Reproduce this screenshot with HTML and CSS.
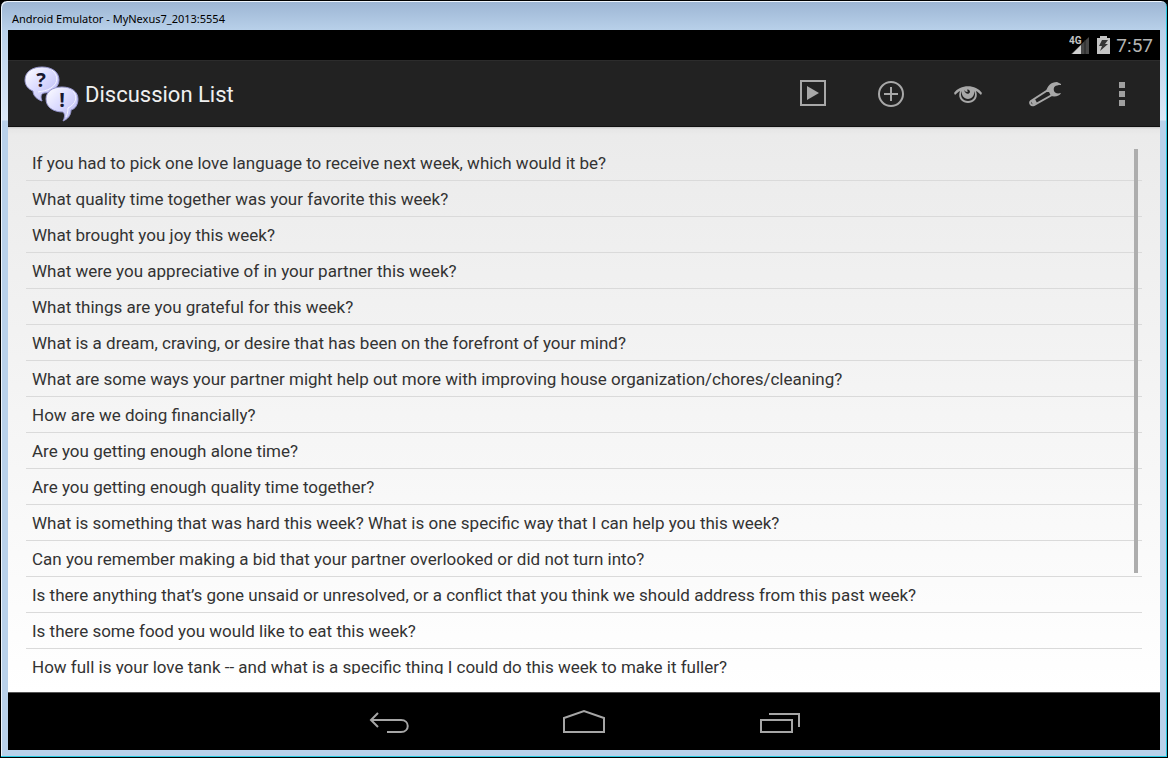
FILE: index.html
```html
<!DOCTYPE html>
<html lang="en">
<head>
    <meta charset="UTF-8">
    <meta name="viewport" content="width=device-width, initial-scale=1.0">
    <title>Discussion List</title>
    <link rel="stylesheet" href="styles.css">
</head>
<body>
    <div class="window">
        <div class="titleBar">Android Emulator - MyNexus7_2013:5554</div>
        <div class="screen">
            <div class="statusBar">
                <svg class="signal" width="22" height="20" viewBox="0 0 22 20">
                    <path d="M2 19L20 2V19Z" fill="#484848"/>
                    <path d="M3 19L12 10V19Z" fill="#d0d0d0"/>
                    <path d="M16 5V19" stroke="#222"/>
                    <text x="0" y="9" class="network">4G</text>
                </svg>
                <svg width="13" height="20" viewBox="0 0 13 20">
                    <path d="M0 3H3V1H10V3H13V19H0Z" fill="#c4c4c4"/>
                    <path d="M5 5H11L8 9H11L3 16L5 11H2Z" fill="#333"/>
                </svg>
                <span class="clock">7:57</span>
            </div>
            <header class="actionBar">
                <svg class="logo" width="56" height="56" viewBox="0 0 56 56">
                    <defs>
                        <linearGradient id="bubble" x1="0" y1="0" x2="1" y2="1">
                            <stop offset="0" stop-color="#ffffff"/>
                            <stop offset=".45" stop-color="#dcdcff"/>
                            <stop offset="1" stop-color="#b4b4f0"/>
                        </linearGradient>
                    </defs>
                    <path d="M18 1C28 1 35 6 35 14C35 21 28 27 20 27C16 28 17 32 18 35C12 33 9 29 9 25C4 23 1 19 1 14C1 6 8 1 18 1Z" fill="url(#bubble)" stroke="#9696cc"/>
                    <path d="M28 4C34 9 35 17 27 22C23 25 18 25 14 26" fill="none" stroke="#f4f4ff" stroke-width="1"/>
                    <path d="M38 21C48 21 54 26 54 33C54 39 51 43 47 44C47 49 44 53 39 55C41 51 41 48 39 46C29 46 22 41 22 33C22 26 28 21 38 21Z" fill="url(#bubble)" stroke="#9696cc"/>
                    <path d="M49 25C54 31 52 38 44 42C44 46 43 49 42 51" fill="none" stroke="#f4f4ff" stroke-width="1"/>
                    <text x="17" y="21" class="mark">?</text>
                    <text x="38" y="41" class="mark">!</text>
                </svg>
                <h1>Discussion List</h1>
                <div class="actions">
                    <button aria-label="Play">
                        <svg width="34" height="34" viewBox="0 0 34 34">
                            <path d="M4 4H28V28H4Z" fill="none" stroke="#a8a8a8" stroke-width="2"/>
                            <path d="M10 9L22 16L10 23Z" fill="#a8a8a8"/>
                        </svg>
                    </button>
                    <button aria-label="Add">
                        <svg width="34" height="34" viewBox="0 0 34 34" fill="none" stroke="#a8a8a8" stroke-width="2">
                            <circle cx="17" cy="17" r="12"/>
                            <path d="M17 10V24M10 17H24"/>
                        </svg>
                    </button>
                    <button aria-label="View">
                        <svg width="34" height="34" viewBox="0 0 34 34">
                            <path d="M3 16C9 7 25 7 31 16L30 18C28 16 27 15 25 14C28 22 22 26 17 26C12 26 6 22 9 14C7 15 6 16 4 18Z" fill="#a8a8a8"/>
                            <path d="M11 14C8 19 12 24 17 24C22 24 26 19 23 14C24 18 21 22 17 22C13 22 10 18 11 14Z" fill="#222"/>
                            <path d="M13 13C14 17 18 18 19 15C19 13 17 12 16 13C17 14 17 15 16 15C15 15 14 14 13 13Z" fill="#222"/>
                        </svg>
                    </button>
                    <button aria-label="Tools">
                        <svg width="34" height="34" viewBox="0 0 34 34">
                            <path d="M20 13L3 24C1 26 3 29 6 28L24 18" fill="none" stroke="#a8a8a8" stroke-width="2"/>
                            <path d="M3 24L7 22L9 26L5 28Z" fill="#a8a8a8"/>
                            <path d="M18 15C19 9 23 5 29 5L33 7V8C27 8 25 10 26 14C27 16 29 17 33 16C32 19 27 20 23 19L21 15Z" fill="#a8a8a8"/>
                        </svg>
                    </button>
                    <button aria-label="More options">
                        <svg width="34" height="34" viewBox="0 0 34 34" fill="#a0a0a0">
                            <path d="M14 5H20V11H14ZM14 14H20V20H14ZM14 23H20V29H14Z"/>
                        </svg>
                    </button>
                </div>
            </header>
            <main class="content">
                <ul class="questions">
                    <li>If you had to pick one love language to receive next week, which would it be?</li>
                    <li>What quality time together was your favorite this week?</li>
                    <li>What brought you joy this week?</li>
                    <li>What were you appreciative of in your partner this week?</li>
                    <li>What things are you grateful for this week?</li>
                    <li>What is a dream, craving, or desire that has been on the forefront of your mind?</li>
                    <li>What are some ways your partner might help out more with improving house organization/chores/cleaning?</li>
                    <li>How are we doing financially?</li>
                    <li>Are you getting enough alone time?</li>
                    <li>Are you getting enough quality time together?</li>
                    <li>What is something that was hard this week? What is one specific way that I can help you this week?</li>
                    <li>Can you remember making a bid that your partner overlooked or did not turn into?</li>
                    <li>Is there anything that’s gone unsaid or unresolved, or a conflict that you think we should address from this past week?</li>
                    <li>Is there some food you would like to eat this week?</li>
                    <li>How full is your love tank -- and what is a specific thing I could do this week to make it fuller?</li>
                </ul>
                <div class="scrollbar"></div>
            </main>
            <nav class="navBar">
                <button aria-label="Back">
                    <svg width="44" height="28" viewBox="0 0 44 28" fill="none" stroke="#a6a6a6" stroke-width="2">
                        <path d="M11 5L4 12L11 19M4 12H34C43 12 43 24 34 24H20"/>
                    </svg>
                </button>
                <button aria-label="Home">
                    <svg width="44" height="28" viewBox="0 0 44 28" fill="none" stroke="#a6a6a6" stroke-width="2">
                        <path d="M2 24V10L22 3L42 10V24Z"/>
                    </svg>
                </button>
                <button aria-label="Recent apps">
                    <svg width="44" height="28" viewBox="0 0 44 28" fill="none" stroke="#a6a6a6" stroke-width="2">
                        <path d="M4 12H35V24H4ZM12 6H42V19"/>
                    </svg>
                </button>
            </nav>
        </div>
    </div>
</body>
</html>
```
FILE: styles.css
```css
body{
    margin: 0;
    background-color: #000;
    font-family: Roboto, sans-serif;
}
button{
    display: flex;
    align-items: center;
    justify-content: center;
    padding: 0;
    border: 0;
    background: none;
}
.window{
    display: flex;
    flex-direction: column;
    box-sizing: border-box;
    height: 100vh;
    padding: 0 6px 6px;
    border: 1px solid #000;
    border-radius: 7px 7px 0 0;
    background: linear-gradient(#9cb5d3, #b9d1ea 30px, #dce8f6 119px, #b9d1ea 120px);
    box-shadow: inset -1px -1px #27c8e0, inset 1px 1px #eef5fc;
}
.titleBar{
    height: 29px;
    padding-left: 5px;
    line-height: 35px;
    font-family: "Noto Sans", sans-serif;
    font-size: 11px;
    color: #000;
}
.screen{
    flex: 1;
    display: flex;
    flex-direction: column;
    min-height: 0;
    margin: 0 1px 1px;
    background-color: #000;
}
.statusBar{
    display: flex;
    align-items: center;
    justify-content: flex-end;
    gap: 6px;
    height: 30px;
    padding-right: 7px;
}
.network{
    font-size: 10px;
    font-weight: bold;
    fill: #c4c4c4;
}
.clock{
    font-size: 19px;
    color: #b4b4b4;
}
.actionBar{
    display: flex;
    align-items: center;
    box-sizing: border-box;
    height: 67px;
    padding-left: 16px;
    border-top: 1px solid #2c2c2c;
    border-bottom: 1px solid #111;
    background-color: #222;
}
.mark{
    font-family: "Noto Sans", sans-serif;
    font-size: 20px;
    font-weight: bold;
    fill: #181830;
    text-anchor: middle;
}
h1{
    margin: 0 0 0 5px;
    padding-top: 2px;
    font-size: 22px;
    font-weight: normal;
    color: #f0f0f0;
}
.actions{
    display: flex;
    align-self: stretch;
    margin-left: auto;
}
.actions button{
    width: 77px;
}
.content{
    position: relative;
    flex: 1;
    display: flex;
    min-height: 0;
    padding: 18px;
    background: linear-gradient(#c8c8c8, #e6e6e6 2px, #ebebeb 8px, #fff);
}
.questions{
    flex: 1;
    margin: 0;
    padding: 0;
    overflow: hidden;
    list-style: none;
}
.questions li{
    padding: 2px 0 0 6px;
    border-bottom: 1px solid #dadada;
    line-height: 33px;
    font-size: 17px;
    color: #333;
}
.scrollbar{
    position: absolute;
    top: 22px;
    right: 22px;
    width: 4px;
    height: 75%;
    background-color: #adadad;
}
.navBar{
    display: flex;
    justify-content: center;
    height: 57px;
    border-top: 1px solid #555;
}
.navBar button{
    width: 195px;
}
```
